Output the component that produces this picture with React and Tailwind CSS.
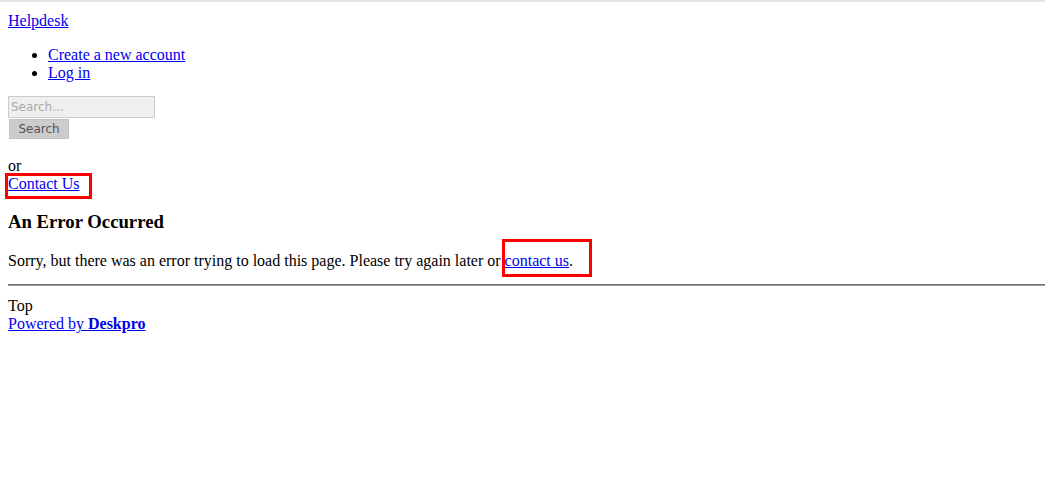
import React from "react";

const linkCls = "text-[#0000ee] underline";

const App = () => {
  return (
    <div className="min-h-[492px] bg-white text-black font-['Liberation_Serif',serif] text-[16px] leading-[18px]">
      {/* top rule */}
      <div className="h-[2px] bg-[#e3e3e3]" />

      <div className="px-2 pt-[10px]">
        {/* Header */}
        <a href="#" className={linkCls}>
          Helpdesk
        </a>
        <ul className="list-disc pl-10 mt-4 mb-[14px]">
          <li>
            <a href="#" className={linkCls}>
              Create a new account
            </a>
          </li>
          <li>
            <a href="#" className={linkCls}>
              Log in
            </a>
          </li>
        </ul>

        {/* Search */}
        <form className="mb-[18px]" onSubmit={(e) => e.preventDefault()}>
          <input
            type="text"
            placeholder="Search..."
            className="block w-[147px] h-[22px] px-[2px] bg-[#efefef] border border-[#cccccc] font-['DejaVu_Sans',sans-serif] text-[12px] text-[#999] placeholder:text-[#aaaaaa] outline-none"
          />
          <button
            type="submit"
            className="block mt-[1px] ml-[1px] w-[60px] h-[20px] bg-[#cccccc] border border-[#c2c2c2] font-['DejaVu_Sans',sans-serif] text-[12px] text-[#555]"
          >
            Search
          </button>
        </form>

        <div>or</div>
        <div className="relative">
          <a href="#" className={linkCls}>
            Contact Us
          </a>
          <span className="absolute left-[-3px] top-[-2px] w-[87px] h-[26px] border-[3px] border-[#ff0000] pointer-events-none" />
        </div>

        {/* Error */}
        <h3 className="font-bold text-[18.72px] leading-[22px] mt-[18px] mb-[19px]">
          An Error Occurred
        </h3>
        <p className="mb-[14px]">
          Sorry, but there was an error trying to load this page. Please try
          again later or{" "}
          <span className="relative">
            <a href="#" className={linkCls}>
              contact us
            </a>
            <span className="absolute left-[-3px] top-[-13px] w-[90px] h-[38px] border-[3px] border-[#ff0000] pointer-events-none" />
          </span>
          .
        </p>
      </div>

      {/* Footer */}
      <div className="pl-2">
        <div className="h-[2px] bg-[#707070] border-b border-[#9a9a9a]" />
        <div className="pt-[11px]">
          <div>Top</div>
          <a href="#" className={linkCls}>
            Powered by <b>Deskpro</b>
          </a>
        </div>
      </div>
    </div>
  );
};

export default App;
